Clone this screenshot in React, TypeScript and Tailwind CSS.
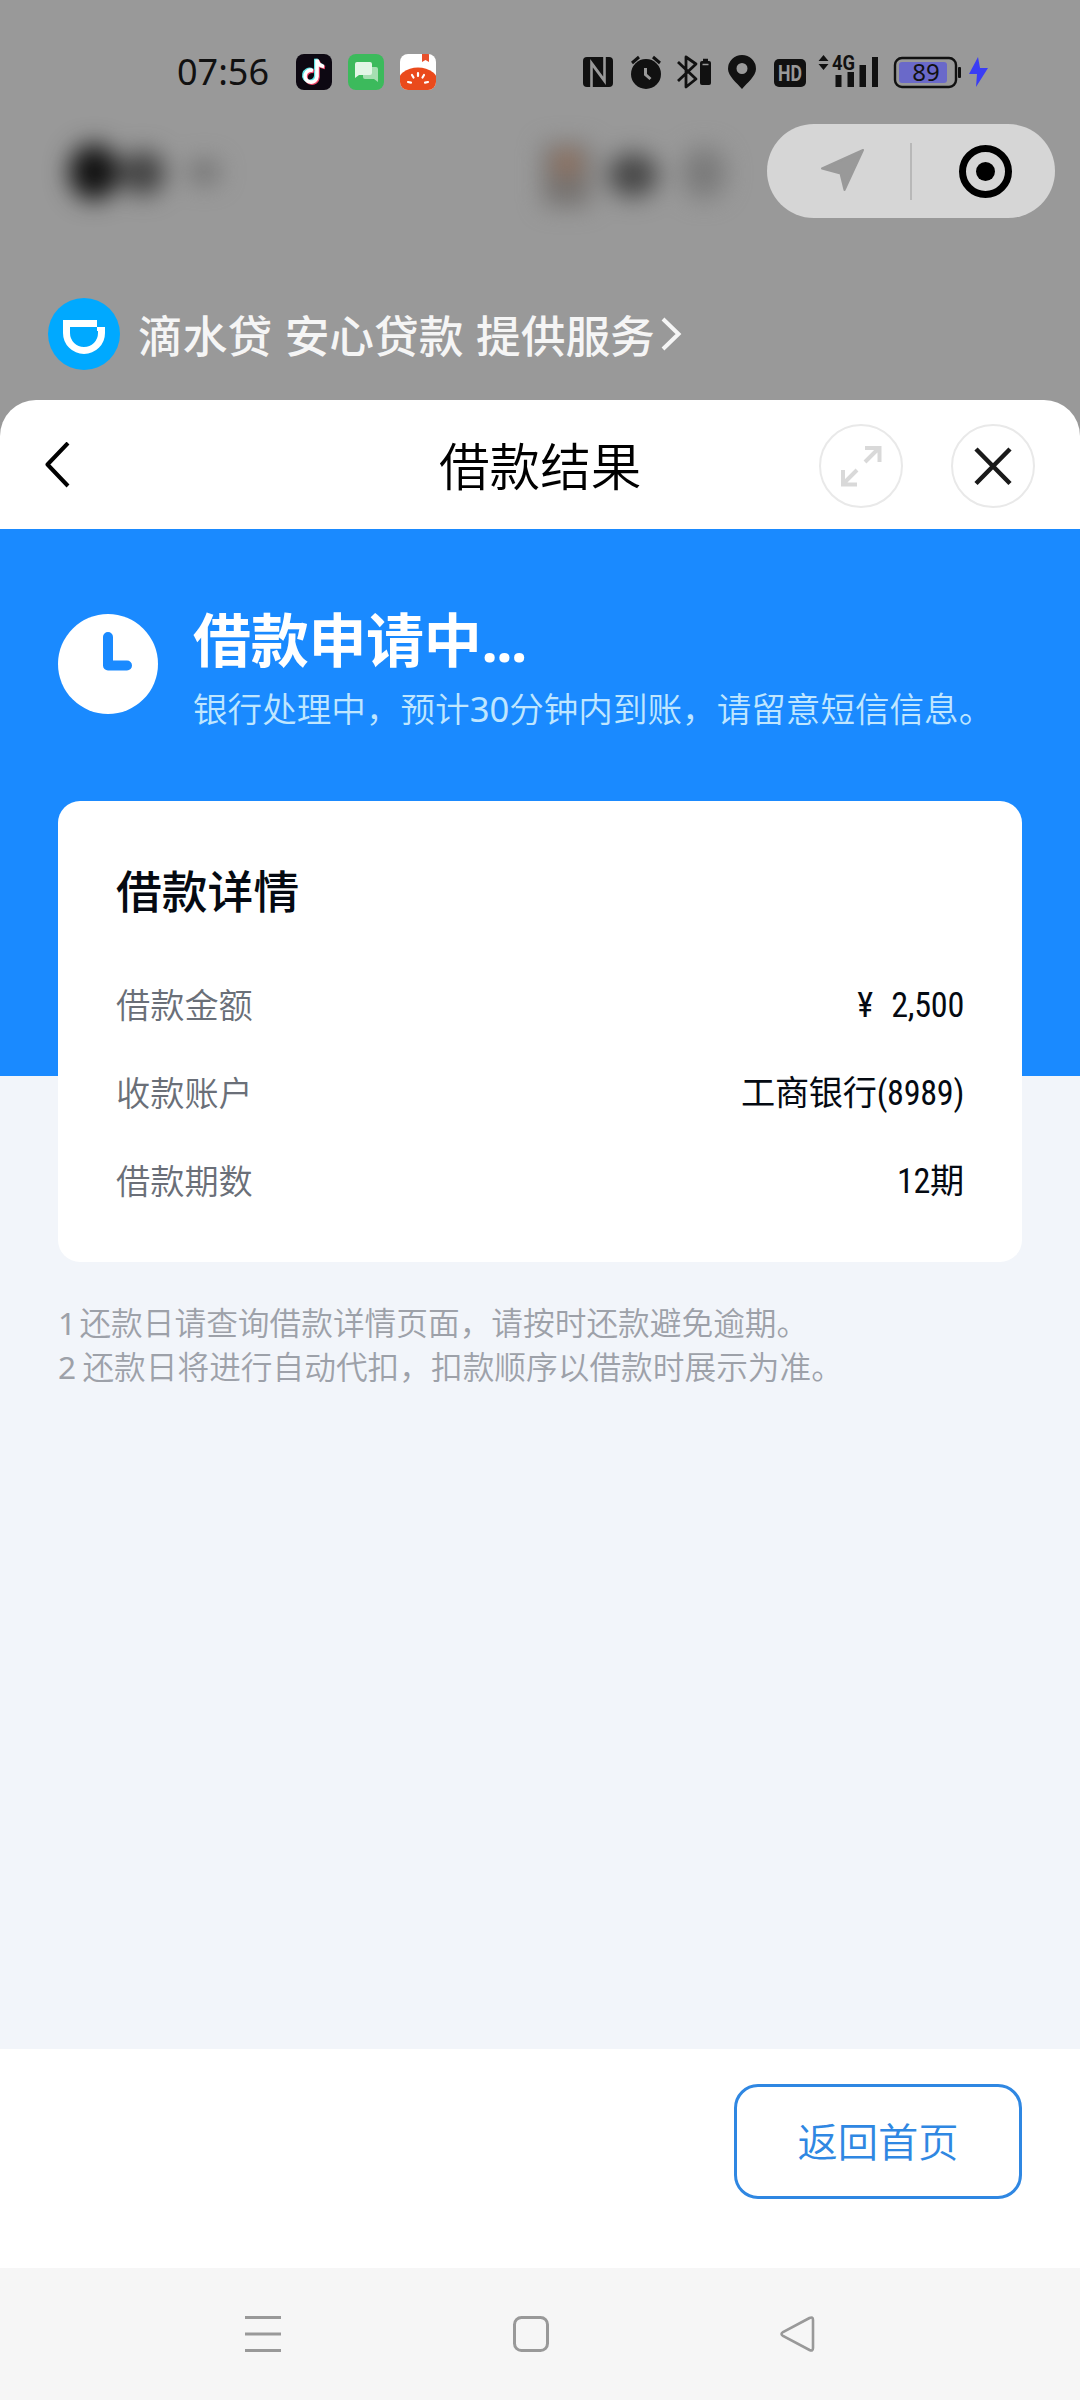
import React from "react";

const details = [
  { label: "借款金额", value: "¥ 2,500" },
  { label: "收款账户", value: "工商银行(8989)" },
  { label: "借款期数", value: "12期" },
];

const AppIcons = () => (
  <div className="flex gap-4 ml-[27px]">
    <svg width="36" height="36" viewBox="0 0 36 36">
      <rect width="36" height="36" rx="8" fill="#0d0812" />
      <g fill="none" strokeWidth="3.600">
        <path d="M17 16.500a6 6 0 1 0 4 6V5.500c.5 4 3.500 6.500 7 7" transform="translate(-1.200 -.8)" stroke="#5fe6e8" />
        <path d="M17 16.500a6 6 0 1 0 4 6V5.500c.5 4 3.500 6.500 7 7" transform="translate(1 1)" stroke="#f2476a" />
        <path d="M17 16.500a6 6 0 1 0 4 6V5.500c.5 4 3.500 6.500 7 7" stroke="#fff" />
      </g>
    </svg>
    <svg width="36" height="36" viewBox="0 0 36 36">
      <rect width="36" height="36" rx="8" fill="#3cba5c" />
      <path d="M15 13h13a2 2 0 0 1 2 2v13l-4-3H17a2 2 0 0 1-2-2z" fill="#a5dfb2" />
      <path d="M9 8h13a2 2 0 0 1 2 2v9a2 2 0 0 1-2 2H11l-4 3V10a2 2 0 0 1 2-2z" fill="#e2f6e6" />
    </svg>
    <svg width="36" height="36" viewBox="0 0 36 36">
      <clipPath id="tomato">
        <rect width="36" height="36" rx="8" />
      </clipPath>
      <g clipPath="url(#tomato)">
        <rect width="36" height="36" fill="#fff" />
        <path d="M22 0h7v8l-3.500-2L22 8z" fill="#e8502c" />
        <ellipse cx="18" cy="30" rx="21" ry="16.500" fill="#ea4a1c" />
        <path d="M18 19v3M12 21l1.500 2.500M24 21l-1.500 2.500M8 28l3 .6M28 28l-3 .6" stroke="#fff" strokeWidth="2.200" strokeLinecap="round" />
      </g>
    </svg>
  </div>
);

const StatusIcons = () => (
  <svg width="410" height="40" viewBox="580 51 410 40" fill="#111">
    {/* nfc */}
    <rect x="583" y="56" width="30" height="30" rx="4" />
    <path d="M591.500 86V62l13 17.500M604.500 56v24l-13-17.500" fill="none" stroke="#999" strokeWidth="2.600" />
    {/* alarm */}
    <circle cx="646" cy="73" r="15" />
    <path d="M632 62l7-6M660 62l-7-6" stroke="#111" strokeWidth="3" fill="none" />
    <path d="M645.500 67v6.500l5 4.500" stroke="#999" strokeWidth="3" fill="none" />
    {/* bluetooth + battery */}
    <path d="M678 61l18 17-10 8V56l10 7-18 17" fill="none" stroke="#111" strokeWidth="2.800" strokeLinejoin="round" />
    <rect x="700" y="60" width="11" height="24" rx="2" />
    <path d="M703 59h5" stroke="#111" strokeWidth="2.500" />
    <path d="M702.500 63.500h6" stroke="#999" strokeWidth="1.500" />
    {/* location */}
    <path fillRule="evenodd" d="M742 54a14 14 0 0 1 14 14c0 7-9 14-14 20c-5-6-14-13-14-20a14 14 0 0 1 14-14zm0 8a5.500 5.500 0 1 0 0 11a5.500 5.500 0 0 0 0-11z" />
    {/* hd */}
    <rect x="774" y="58" width="32" height="28" rx="5" />
    <text x="790" y="80" textAnchor="middle" textLength="24" lengthAdjust="spacingAndGlyphs" className="font-['Roboto',sans-serif] font-bold text-[22px]" fill="#999">
      HD
    </text>
    {/* signal */}
    <path d="M818.500 60l5-6 5 6zM818.500 63l5 6 5-6z" />
    <text x="832" y="69" textLength="23" lengthAdjust="spacingAndGlyphs" className="font-['Roboto',sans-serif] font-bold text-[20px]">
      4G
    </text>
    <path d="M835.500 74h6v12h-6zM847.500 71h6.500v15h-6.500zM859.500 64h6.500v22h-6.500zM872 56h6v30h-6z" />
    {/* battery */}
    <rect x="895" y="57" width="61" height="29" rx="7" fill="none" stroke="#111" strokeWidth="2.400" />
    <rect x="899" y="61" width="48" height="21" rx="3" fill="#6a69c9" />
    <rect x="958" y="66" width="3" height="11" rx="1" />
    <text x="926" y="80" textAnchor="middle" className="font-['Noto_Sans',sans-serif] text-[24px]">
      89
    </text>
    <path d="M978 56l-9 17h8l-1 13 12-19h-8z" fill="#3a3df5" />
  </svg>
);

const StatusBar = () => (
  <div className="flex items-center h-[101px] pt-[43px] pl-[177px]">
    <p className="w-[92px] font-['Noto_Sans',sans-serif] text-[36px] leading-[36px] text-[#111] whitespace-nowrap">
      07:56
    </p>
    <AppIcons />
    <div className="ml-[144px]">
      <StatusIcons />
    </div>
  </div>
);

const Capsule = () => (
  <div className="flex items-center w-[288px] h-[94px] rounded-full bg-[#d6d6d6]">
    <svg width="288" height="94" viewBox="767 124 288 94">
      <path d="M863 150l-41 18.500 18.500 5L844.500 190z" fill="#999" stroke="#999" strokeWidth="2" strokeLinejoin="round" />
      <path d="M911 143v57" stroke="#b8b8b8" strokeWidth="2" />
      <circle cx="985.500" cy="171.500" r="23" fill="none" stroke="#000" strokeWidth="7" />
      <circle cx="985.500" cy="171.500" r="9.500" />
    </svg>
  </div>
);

// Frosted nav items behind the sheet
const BlurredNav = () => (
  <svg width="767" height="140" viewBox="0 101 767 140">
    <filter id="soft" x="-100%" y="-100%" width="300%" height="300%" colorInterpolationFilters="sRGB">
      <feGaussianBlur stdDeviation="12" />
    </filter>
    <g filter="url(#soft)">
      <ellipse cx="94" cy="172" rx="25" ry="28" fill="#101010" />
      <ellipse cx="143" cy="173" rx="22" ry="22" fill="#404040" />
      <ellipse cx="204" cy="172" rx="16" ry="12" fill="#707070" />
      <rect x="543" y="144" width="48" height="62" rx="8" fill="#757270" />
      <rect x="556" y="152" width="22" height="22" rx="8" fill="#a0745a" />
      <ellipse cx="633" cy="175" rx="25" ry="22" fill="#464646" />
      <ellipse cx="704" cy="173" rx="22" ry="26" fill="#7a7a7a" />
    </g>
  </svg>
);

const SheetHeader = () => (
  <div className="flex items-center h-[129px] pt-[2px] pl-[44px] pr-[45px] rounded-t-[36px] bg-white">
    <svg width="28" height="48" viewBox="44 442 28 48">
      <path d="M68 443L47.500 464.500 68 486" fill="none" stroke="#000" strokeWidth="4" strokeLinejoin="round" />
    </svg>
    <h1 className="ml-[367px] mt-[2px] w-[204px] text-[50.600px] leading-[60px] font-[350] text-black whitespace-nowrap">
      借款结果
    </h1>
    <div className="ml-auto flex gap-[48px]">
      <div className="w-[84px] h-[84px] rounded-full border-2 border-[#e9e9e9]">
        <svg width="80" height="80" viewBox="821 426 80 80" fill="none" stroke="#d9d9d9" strokeWidth="4">
          <path d="M865 448h14.500v14M865 462l14-14M843 470v14.500h14M857 470l-14 14" />
        </svg>
      </div>
      <div className="w-[84px] h-[84px] rounded-full border-2 border-[#e9e9e9]">
        <svg width="80" height="80" viewBox="953 426 80 80" fill="none" stroke="#1a1a1a" strokeWidth="4.500">
          <path d="M976 449l34 34.500M1010 449l-34 34.500" />
        </svg>
      </div>
    </div>
  </div>
);

const App = () => {
  return (
    <div className="w-[1080px] h-[2400px] flex flex-col bg-[#999] overflow-hidden font-['Noto_Sans','Noto_Sans_CJK_SC',sans-serif]">
      <StatusBar />
      <div className="flex items-center h-[140px]">
        <BlurredNav />
        <Capsule />
      </div>

      {/* Service provider */}
      <div className="flex items-center h-[72px] mt-[57px] pl-12">
        <svg width="72" height="72" viewBox="48 298 72 72">
          <circle cx="84" cy="334" r="36" fill="#00a9ff" />
          <path d="M97 323.500H66.500v9.500a17.500 17.500 0 0 0 35 0v-5.500H97" fill="none" stroke="#fff" strokeWidth="7" />
          <path d="M97 320v7h9v-7z" fill="#00a9ff" />
        </svg>
        <p className="ml-[18px] mt-[3px] text-[44.700px] leading-[60px] font-medium text-[#f5f5f5] whitespace-nowrap [word-spacing:1px]">
          滴水贷 安心贷款 提供服务
        </p>
        <svg width="22" height="36" viewBox="660 315 22 36" className="ml-[5px]">
          <path d="M663 318l15.500 15L663 348" fill="none" stroke="#f5f5f5" strokeWidth="4" />
        </svg>
      </div>

      {/* Bottom sheet */}
      <div className="mt-[30px]">
        <SheetHeader />
      </div>
      <div className="flex flex-col h-[1520px] bg-[linear-gradient(#1a8aff_547px,#f2f5fa_547px)] px-[58px]">
        <div className="flex h-[272px] pt-[76px]">
          <svg width="100" height="100" viewBox="0 0 100 100" className="mt-[9px]">
            <circle cx="50" cy="50" r="50" fill="#fff" />
            <path d="M50 23v28.500h19" fill="none" stroke="#1a8aff" strokeWidth="10" strokeLinecap="round" strokeLinejoin="round" />
          </svg>
          <div className="ml-[35px]">
            <h2 className="text-[58px] leading-[70px] font-bold text-white whitespace-nowrap tracking-[-.3px]">
              借款申请中<span className="tracking-[-1.500px]">...</span>
            </h2>
            <p className="mt-[12px] text-[34.600px] leading-[44px] font-[350] text-[#bfe6ff] whitespace-nowrap">
              银行处理中，预计<span className="font-normal">30</span>分钟内到账，请留意短信信息。
            </p>
          </div>
        </div>

        <div className="h-[461px] px-[58px] pt-[58px] rounded-[22px] bg-white">
          <h3 className="text-[45.800px] leading-[64px] font-medium text-[#050a12]">
            借款详情
          </h3>
          <div className="mt-[38px]">
            {details.map((item) => (
              <div key={item.label} className="flex justify-between items-center h-[88px] text-[34.200px]">
                <span className="font-[350] text-[#6a6f78]">{item.label}</span>
                <span className="mt-[2px] text-[#050a12] tracking-[-.3px] [word-spacing:11px] font-['Roboto_Condensed','Roboto','Noto_Sans_CJK_SC',sans-serif] [font-stretch:85%]">
                  {item.value}
                </span>
              </div>
            ))}
          </div>
        </div>

        <div className="mt-[39px] text-[31.700px] leading-[43.500px] font-[350] text-[#9da1a9] whitespace-nowrap">
          <p className="[word-spacing:-5px]">
            <span className="font-normal">1</span> 还款日请查询借款详情页面，请按时还款避免逾期。
          </p>
          <p className="[word-spacing:-2px]">
            <span className="font-normal">2</span> 还款日将进行自动代扣，扣款顺序以借款时展示为准。
          </p>
        </div>
      </div>

      {/* Footer action */}
      <div className="h-[219px] pt-[35px] pr-[58px] bg-white">
        <button className="flex items-center justify-center ml-auto w-[288px] h-[115px] pt-[2px] rounded-[24px] border-[3px] border-[#2f87e2] text-[40.300px] font-[350] text-[#2f87e2]">
          返回首页
        </button>
      </div>

      {/* System navigation */}
      <div className="flex items-center h-[132px] pl-[243px] bg-[#f6f6f6]">
        <svg width="40" height="40" viewBox="0 0 40 40" stroke="#999" strokeWidth="3">
          <path d="M2 3.500h36M2 20h36M2 36.500h36" />
        </svg>
        <svg width="40" height="40" viewBox="0 0 40 40" fill="none" stroke="#999" strokeWidth="3" className="ml-[228px]">
          <rect x="3.500" y="3.500" width="33" height="33" rx="7" />
        </svg>
        <svg width="40" height="40" viewBox="0 0 40 40" fill="none" stroke="#999" strokeWidth="2.600" className="ml-[226px]">
          <path d="M32.500 4L6 18q-3 2 0 4l26.500 14q3.500 1.500 3.500-2V6q0-3.500-3.500-2z" />
        </svg>
      </div>
    </div>
  );
};

export default App;
